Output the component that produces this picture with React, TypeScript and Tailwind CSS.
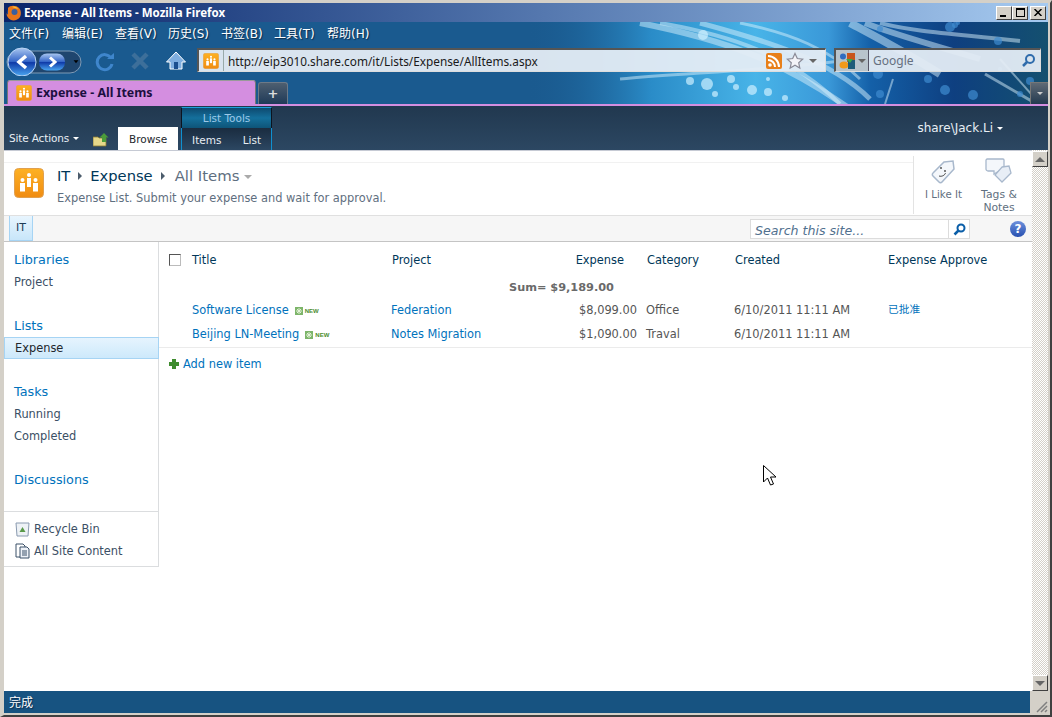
import React from "react";

const dj = "font-['DejaVu_Sans','Noto_Sans_CJK_SC',sans-serif]";

function SiteLogo({ size = 30 }: { size?: number }) {
  return (
    <svg width={size} height={size} viewBox="0 0 30 30">
      <defs>
        <linearGradient id="lg" x1="0" y1="0" x2="0" y2="1">
          <stop offset="0" stopColor="#fdb124" />
          <stop offset="1" stopColor="#f08c12" />
        </linearGradient>
      </defs>
      <rect x="0.5" y="0.5" width="29" height="29" rx="4" fill="url(#lg)" stroke="#e0a050" />
      <g fill="#fff">
        <circle cx="15" cy="7" r="2" />
        <rect x="13" y="10" width="4" height="9" />
        <circle cx="8.500" cy="12" r="2" />
        <rect x="6" y="15" width="5" height="8.500" />
        <circle cx="21.500" cy="12" r="2" />
        <rect x="19" y="15" width="5" height="8.500" />
      </g>
    </svg>
  );
}

function Firefox() {
  return (
    <svg width="16" height="16" viewBox="0 0 16 16">
      <circle cx="8" cy="8" r="7" fill="#2a4f8f" />
      <path d="M2 3c2-3 8-3 11 0 2 2 2.500 6 1 9-2 3-6 4-9 3-3-1.500-4.500-4-4.500-7 0.500 1 1 1.500 1.500 1.500C2 7 2 5 2 3z" fill="#e8751a" />
      <circle cx="8.500" cy="7" r="3" fill="#3a5f9f" />
      <path d="M6 2c3-1 5 0 6 2-2-1-4-1-6-2z" fill="#f7c33a" />
    </svg>
  );
}

function Art() {
  const dots = [
    [703, 36, 5], [707, 85, 6], [731, 80, 4], [736, 88, 3], [752, 91, 5], [768, 93, 4], [785, 99, 3], [768, 80, 2], [715, 95, 3], [690, 82, 4],
    [950, 28, 5], [955, 26, 3], [998, 42, 4], [945, 91, 5], [973, 96, 5], [928, 80, 4], [878, 75, 5], [880, 95, 4], [958, 24, 2],
    [880, 30, 3], [1020, 95, 3], [1000, 70, 2], [1030, 82, 4],
  ];
  return (
    <svg className="absolute left-0 top-0 pointer-events-none" width="1044" height="82" viewBox="4 23 1044 82" preserveAspectRatio="none">
      <defs>
        <linearGradient id="a1" x1="0" y1="0" x2="1" y2="0">
          <stop offset="0" stopColor="#1a5a8f" stopOpacity="0" />
          <stop offset="0.5" stopColor="#1a5a8f" stopOpacity="0" />
          <stop offset="0.62" stopColor="#2a8cc8" />
          <stop offset="0.72" stopColor="#48b4e8" />
          <stop offset="0.79" stopColor="#3a98d8" />
          <stop offset="0.83" stopColor="#1460a8" />
          <stop offset="0.91" stopColor="#0e3f80" />
          <stop offset="1" stopColor="#14506f" />
        </linearGradient>
      </defs>
      <rect x="4" y="23" width="1044" height="82" fill="url(#a1)" />
      <g stroke="#d8f0fc" fill="none" strokeOpacity="0.5">
        <path d="M640 24C720 40 780 60 850 110" strokeWidth="6" />
        <path d="M660 24C730 36 790 56 840 105" strokeWidth="4" />
        <path d="M700 24C760 40 830 60 870 100" strokeWidth="5" />
        <path d="M740 24C790 34 830 50 860 80" strokeWidth="3" />
        <path d="M620 80C680 74 760 72 840 62" strokeWidth="3" />
        <path d="M850 24C880 40 900 50 940 75" strokeWidth="8" />
        <path d="M865 24C895 36 930 45 980 60" strokeWidth="6" />
        <path d="M880 24C920 34 960 35 1020 42" strokeWidth="4" />
        <path d="M1000 60L1040 105" strokeWidth="2" />
        <path d="M985 75L1035 104" strokeWidth="3" />
        <path d="M893 80L885 105" strokeWidth="2" />
      </g>
      <g>
        {dots.map(([x, y, r], i) => (
          <circle key={i} cx={x} cy={y} r={r} fill={x > 860 ? "#3f8cd0" : "#cdf0ff"} fillOpacity={0.7} />
        ))}
      </g>
    </svg>
  );
}

function WinBtn({ children }: { children: React.ReactNode }) {
  return (
    <div className="w-[16px] h-[14px] bg-[#d4d0c8] border-t border-l border-white border-r border-b border-r-[#404040] border-b-[#404040] flex items-center justify-center">
      {children}
    </div>
  );
}

const navHead = "text-[12.8px] leading-[16px] text-[#0072bc]";
const navItem = "text-[11.4px] leading-[14px] text-[#3b4f65]";
const headCell = "text-[11.4px] leading-[14px] text-[#003759]";
const linkCell = "text-[11.4px] leading-[14px] text-[#0072bc]";
const dataCell = "text-[11.4px] leading-[14px] text-[#555555]";
const rowGrid = "grid grid-cols-[33px_199px_169px_77px_9px_88px_154px_1fr] items-center";

function NewBadge() {
  return (
    <span className="inline-flex items-center ml-[6px] gap-[2px] align-middle">
      <svg width="8" height="8" viewBox="0 0 8 8">
        <rect width="8" height="8" fill="#7db56a" />
        <path d="M4 1v6M1 4h6M2 2l4 4M6 2L2 6" stroke="#e4f2d8" strokeWidth="1" />
      </svg>
      <span className="text-[6px] leading-[8px] font-bold text-[#4c8c2c] font-['Liberation_Sans',sans-serif]">NEW</span>
    </span>
  );
}

export default function App() {
  return (
    <div className={`w-[1052px] h-[717px] overflow-hidden bg-[#d4d0c8] flex flex-col border-t-[3px] border-l-[4px] border-r-[2px] border-b-[2px] pr-[2px] border-t-[#d4d0c8] border-l-[#d4d0c8] border-r-[#404040] border-b-[#404040] ${dj}`}>
      {/* Title bar */}
      <div className="h-[19px] shrink-0 bg-gradient-to-r from-[#0a246a] to-[#a6caf0] flex items-center justify-between pl-[2px] pr-[2px]">
        <div className="flex items-center gap-[2px]">
          <Firefox />
          <span className="text-[11.5px] font-bold text-white font-['Noto_Sans',sans-serif] leading-[14px]">Expense - All Items - Mozilla Firefox</span>
        </div>
        <div className="flex items-center">
          <WinBtn><span className="w-[6px] h-[2px] bg-black mt-[7px] mr-[2px]" /></WinBtn>
          <WinBtn><span className="w-[9px] h-[9px] border border-black border-t-2" /></WinBtn>
          <div className="w-[2px]" />
          <WinBtn>
            <svg width="8" height="7" viewBox="0 0 8 7"><path d="M0.500 0l7 7M7.500 0l-7 7" stroke="#000" strokeWidth="1.500" /></svg>
          </WinBtn>
        </div>
      </div>

      {/* Chrome */}
      <div className="relative h-[82px] shrink-0 bg-[#1a5a8f] flex flex-col">
        <Art />
        <div className="relative h-[23px] flex items-center pl-[5px] text-[12px] text-white">
          {["文件(F)", "编辑(E)", "查看(V)", "历史(S)", "书签(B)", "工具(T)", "帮助(H)"].map((m) => (
            <span key={m} className="w-[53px] whitespace-nowrap leading-[16px] [text-shadow:1px_1px_1px_#0b2c4d]">{m}</span>
          ))}
        </div>
        {/* Nav */}
        <div className="relative h-[32px] flex items-center pl-[1px]">
          <div className="relative w-[78px] h-[29px] shrink-0">
            <svg width="78" height="29" viewBox="0 0 78 29">
              <defs>
                <linearGradient id="bk" x1="0" y1="0" x2="0" y2="1">
                  <stop offset="0" stopColor="#a9c6f0" />
                  <stop offset="0.48" stopColor="#3566c8" />
                  <stop offset="0.52" stopColor="#0f3aa8" />
                  <stop offset="1" stopColor="#4aa6f0" />
                </linearGradient>
              </defs>
              <rect x="2" y="4" width="74" height="22" rx="11" fill="#1f466f" stroke="#7f9ab5" />
              <rect x="34" y="6.500" width="26" height="17" rx="8" fill="url(#bk)" />
              <circle cx="17" cy="15" r="14" fill="url(#bk)" stroke="#b8d4f4" strokeWidth="1" />
              <path d="M21 9l-7 6 7 6" fill="none" stroke="#fff" strokeWidth="3.500" />
              <path d="M53 10.500l5 4.500-5 4.500" fill="none" stroke="#fff" strokeWidth="3" transform="translate(-8 0)" />
              <path d="M72 14h5l-2.500 3z" fill="#000" transform="translate(-2 -0.500) scale(0.98)" />
            </svg>
          </div>
          <div className="ml-[11px] w-[22px] h-[22px] shrink-0">
            <svg width="22" height="22" viewBox="0 0 22 22"><path d="M17 8a7.500 7.500 0 1 0 1 6" fill="none" stroke="#3f86cc" strokeWidth="3" /><path d="M13 9h7V3z" fill="#3f86cc" /></svg>
          </div>
          <div className="ml-[14px] w-[20px] h-[20px] shrink-0">
            <svg width="20" height="20" viewBox="0 0 20 20"><path d="M3 3l14 14M17 3L3 17" stroke="#3d6f9a" strokeWidth="4.500" /></svg>
          </div>
          <div className="ml-[16px] w-[20px] h-[20px] shrink-0">
            <svg width="20" height="20" viewBox="0 0 20 20"><path d="M10 1L0.500 11H4v7h12v-7h3.500z" fill="#7faee0" stroke="#fff" strokeWidth="1" /><rect x="8" y="11" width="4" height="7" fill="#1b4f8f" /></svg>
          </div>
          {/* URL bar */}
          <div className="ml-[11px] -mt-[2px] w-[629px] h-[24px] shrink-0 bg-[#e4ecf4]/95 border-t-2 border-l-2 border-t-[#555] border-l-[#555] border-r border-b border-r-[#ddd] border-b-[#ddd] flex items-center">
            <div className="w-[25px] h-[21px] flex items-center justify-center border-r border-[#9aa]">
              <SiteLogo size={16} />
            </div>
            <span className="ml-[4px] text-[11.8px] text-[#1a1a1a] leading-[16px] grow font-['Noto_Sans',sans-serif]">http://eip3010.share.com/it/Lists/Expense/AllItems.aspx</span>
            <svg width="16" height="16" viewBox="0 0 16 16" className="mr-[4px]">
              <rect width="16" height="16" rx="2" fill="#e8801a" />
              <circle cx="4" cy="12" r="1.800" fill="#fff" />
              <path d="M2 7a7 7 0 0 1 7 7M2 3a11 11 0 0 1 11 11" fill="none" stroke="#fff" strokeWidth="2" />
            </svg>
            <svg width="18" height="18" viewBox="0 0 18 18" className="mr-[5px]">
              <path d="M9 1.500l2.300 5 5.400.6-4 3.600 1.100 5.300L9 13.300 4.200 16l1.100-5.300-4-3.600 5.400-.6z" fill="#f4f4f8" stroke="#8a8a96" strokeWidth="1.200" />
            </svg>
            <span className="w-0 h-0 border-l-[4px] border-r-[4px] border-t-[4px] border-transparent border-t-[#666] mr-[8px]" />
          </div>
          {/* Search */}
          <div className="ml-[8px] -mt-[2px] w-[207px] h-[24px] shrink-0 bg-[#e4ecf4]/95 border-t-2 border-l-2 border-t-[#555] border-l-[#555] border-r border-b border-r-[#ddd] border-b-[#ddd] flex items-center">
            <div className="w-[33px] h-[21px] bg-[#b8c4cc] flex items-center pl-[3px] gap-[3px] border-r border-[#556]">
              <svg width="16" height="16" viewBox="0 0 16 16">
                <circle cx="4" cy="3.500" r="3" fill="#2f6cc0" />
                <path d="M8 0h8v9H8z" fill="#c8561c" />
                <ellipse cx="5" cy="12" rx="4.500" ry="3.500" fill="#f29a1a" />
                <path d="M9 7h7v9H9z" fill="#1d5c7a" />
                <path d="M7 6h7l-3 4z" fill="#3fa845" />
              </svg>
              <span className="w-0 h-0 border-l-[4px] border-r-[4px] border-t-[4px] border-transparent border-t-[#666]" />
            </div>
            <span className="ml-[4px] text-[12px] text-[#667080] grow leading-[16px] font-['Noto_Sans',sans-serif]">Google</span>
            <svg width="15" height="15" viewBox="0 0 15 15" className="mr-[4px]"><circle cx="9" cy="6" r="4" fill="none" stroke="#2f6cac" strokeWidth="2" /><path d="M6 9l-4 4" stroke="#2f6cac" strokeWidth="2.500" /></svg>
          </div>
        </div>
        {/* Tabs */}
        <div className="relative h-[27px] flex items-end pl-[3px]">
          <div className="w-[249px] h-[24px] bg-[#d48ee0] border-t border-l border-r border-t-[#999] border-l-[#777] border-r-[#777] rounded-t-[3px] flex items-center pl-[8px] gap-[4px]">
            <SiteLogo size={16} />
            <span className="text-[12.4px] font-bold text-[#1c1040] leading-[16px] mt-px font-['Noto_Sans',sans-serif]">Expense - All Items</span>
          </div>
          <div className="ml-[2px] w-[30px] h-[22px] rounded-t-[3px] bg-gradient-to-b from-[#4e5f70] to-[#1f3a58] border-t border-l border-r border-[#6d7a88] flex items-center justify-center text-[#dddddd] text-[13px] font-bold leading-none">+</div>
          <div className="ml-auto w-[18px] h-[22px] bg-gradient-to-b from-[#5f6a75] to-[#243a50] border-l border-t border-[#777] flex items-center justify-center">
            <span className="w-0 h-0 border-l-[3px] border-r-[3px] border-t-[3px] border-transparent border-t-[#ccc]" />
          </div>
        </div>
      </div>

      {/* Purple line */}
      <div className="h-[2px] bg-[#d48ee0] shrink-0" />

      {/* SP ribbon */}
      <div className="h-[44px] shrink-0 bg-gradient-to-b from-[#21384f] to-[#2c4762] flex items-end text-[11px] leading-[14px] text-white pl-[5px]">
        <div className="flex items-center gap-[4px] mb-[5px] text-[#e8eef4]">
          <span className="text-[10.5px] tracking-[-0.15px]">Site Actions</span>
          <span className="w-0 h-0 border-l-[3px] border-r-[3px] border-t-[3px] border-transparent border-t-white mt-[1px]" />
        </div>
        <div className="ml-[14px] mb-[3px] shrink-0">
          <svg width="16" height="14" viewBox="0 0 16 14">
            <path d="M0 4h5l1 1h7v8H0z" fill="#e6d88a" stroke="#8a7a30" strokeWidth="0.800" />
            <path d="M11 0l4.500 4.500H13V9H9V4.500H6.500z" fill="#4c9c3a" />
          </svg>
        </div>
        <div className="ml-[9px] w-[60px] h-[23px] bg-white flex items-center justify-center text-[#23272c] text-[10.5px] pt-px">Browse</div>
        <div className="ml-[3px] w-[91px] flex flex-col h-[43px] mt-auto">
          <div className="h-[21px] border-t border-x border-[#0c1420] border-t-[#1ca0dc] bg-gradient-to-b from-[#0e4a70] via-[#14709c] to-[#0e5478] flex items-center justify-center text-[#9cc8e8] text-[10.5px]">List Tools</div>
          <div className="h-[22px] border-x border-x-[#1090d0] flex items-center justify-between pl-[10px] pr-[10px] pt-px text-[#e8eef4] text-[10.5px] bg-gradient-to-b from-[#1a2c40] to-[#2c4762]">
            <span>Items</span>
            <span>List</span>
          </div>
        </div>
        <div className="ml-auto mr-[45px] self-center mt-[-1px] flex items-center gap-[4px] text-[12px] text-[#e8eef4]">
          <span>share\Jack.Li</span>
          <span className="w-0 h-0 border-l-[3px] border-r-[3px] border-t-[3px] border-transparent border-t-white mt-[2px]" />
        </div>
      </div>

      {/* Page + scrollbar */}
      <div className="flex-1 min-h-0 flex bg-white">
        <div className="w-[1028px] shrink-0 flex flex-col">
          {/* Title row */}
          <div className="h-[65px] shrink-0 flex border-t border-[#c6cad4]">
            <div className="grow flex bg-[linear-gradient(#f1f1f1,#f1f1f1)] bg-[length:100%_1px] bg-[position:0_11px] bg-no-repeat">
              <div className="pl-[10px] pt-[17px] shrink-0"><SiteLogo size={30} /></div>
              <div className="pl-[13px] pt-[15px] grow">
                <div className="flex items-center h-[20px] text-[14.7px] leading-[20px] text-[#003759]">
                  <span>IT</span>
                  <span className="w-0 h-0 mx-[8px] border-y-[4px] border-l-[4px] border-transparent border-l-[#4c5c6c]" />
                  <span>Expense</span>
                  <span className="w-0 h-0 mx-[8px] border-y-[4px] border-l-[4px] border-transparent border-l-[#4c5c6c]" />
                  <span className="text-[#5e6e80] ml-[2px] text-[14.9px]">All Items</span>
                  <span className="w-0 h-0 ml-[4px] mt-[2px] border-x-[4px] border-t-[4px] border-transparent border-t-[#aaa]" />
                </div>
                <div className="mt-[5px] text-[11.4px] leading-[14px] text-[#5f6f80]">Expense List. Submit your expense and wait for approval.</div>
              </div>
            </div>
            <div className="w-[119px] h-[58px] mt-[5px] shrink-0 border-l border-[#e3e3e3] flex text-[10.2px] leading-[13px] text-[#5f6f80]">
              <div className="w-[59px] flex flex-col items-center pt-[3px]">
                <svg width="26" height="26" viewBox="0 0 26 26" className="-ml-px">
                  <path d="M14 3l9-1 1 8-12 13a2 2 0 0 1-3 0l-6-6a2 2 0 0 1 0-3z" fill="#f4f7fb" stroke="#a8b8cc" strokeWidth="1.500" />
                  <circle cx="11" cy="9" r="0.900" fill="#444" /><circle cx="15" cy="12" r="0.900" fill="#444" />
                  <path d="M9 17c3 1 6-1 6.500-3" fill="none" stroke="#444" strokeWidth="1" />
                </svg>
                <span className="mt-[3px] whitespace-nowrap">I Like It</span>
              </div>
              <div className="w-[52px] flex flex-col items-center pt-[2px] text-center text-[10.8px]">
                <svg width="28" height="27" viewBox="0 0 28 27">
                  <path d="M2 1h16a1 1 0 0 1 1 1v10l-5 1-5 3v-3H3a2 2 0 0 1-2-2V2z" fill="#f4f7fb" stroke="#a8b8cc" strokeWidth="1.300" />
                  <path d="M17 9l7-1 2 7-9 9-7-7z" fill="#e8eef6" stroke="#a8b8cc" strokeWidth="1.300" />
                </svg>
                <span className="mt-[3px]">Tags &amp; Notes</span>
              </div>
            </div>
          </div>
          {/* Breadcrumb bar */}
          <div className="h-[27px] shrink-0 flex items-stretch border-t border-b border-t-[#e0e0e0] border-b-[#c4c4c4] bg-[#f6f6f6]">
            <div className="ml-[5px] w-[24px] bg-gradient-to-b from-[#e8f5fe] to-[#c8e6fa] border-x border-b border-[#a6d4f4] flex items-center justify-center text-[11px] text-[#1d3b56]">IT</div>
            <div className="ml-auto mr-[62px] mt-[3px] mb-[2px] w-[220px] bg-white border border-[#dcdcdc] flex items-center">
              <span className="grow pl-[4px] text-[12.6px] italic leading-[19px] pt-[2px] text-[#51708e]">Search this site...</span>
              <div className="w-[21px] h-full border-l border-[#dcdcdc] flex items-center justify-center">
                <svg width="13" height="13" viewBox="0 0 13 13"><circle cx="8" cy="5" r="3.500" fill="none" stroke="#0a5ea8" strokeWidth="2" /><path d="M5.500 7.500l-4 4" stroke="#0a5ea8" strokeWidth="2.500" /></svg>
              </div>
            </div>
            <div className="absolute left-[1010px] top-[221px] w-[16px] h-[16px] rounded-full bg-gradient-to-b from-[#6d90dc] to-[#2850b0] text-white text-[12px] font-bold flex items-center justify-center leading-none">?</div>
          </div>
          {/* Body */}
          <div className="flex-1 min-h-0 flex">
            <div className="w-[155px] shrink-0 h-[325px] border-r border-b border-[#dbdddf] flex flex-col">
              <div className="h-[270px] border-b border-[#dbdddf] pt-[10px]">
                <div className={`pl-[10px] ${navHead}`}>Libraries</div>
                <div className={`pl-[10px] mt-[7px] ${navItem}`}>Project</div>
                <div className={`pl-[10px] mt-[29px] ${navHead}`}>Lists</div>
                <div className="mt-[3px] h-[22px] pl-[10px] pt-px flex items-center bg-gradient-to-b from-[#e6f4fe] to-[#cde9fb] border border-[#a6d4f4] -mr-px text-[11.4px] text-[#23272c]">Expense</div>
                <div className={`pl-[10px] mt-[25px] ${navHead}`}>Tasks</div>
                <div className={`pl-[10px] mt-[7px] ${navItem}`}>Running</div>
                <div className={`pl-[10px] mt-[8px] ${navItem}`}>Completed</div>
                <div className={`pl-[10px] mt-[29px] ${navHead}`}>Discussions</div>
              </div>
              <div className="pl-[11px] pt-[9px] flex flex-col gap-[6px]">
                <div className={`flex items-center gap-[4px] h-[16px] ${navItem}`}>
                  <svg width="15" height="16" viewBox="0 0 15 16"><path d="M1 2h13l-1 13H2z" fill="#eef2f6" stroke="#8a9ab0" /><path d="M7.500 6l3 5h-6z" fill="#5a9a4a" /></svg>
                  <span>Recycle Bin</span>
                </div>
                <div className={`flex items-center gap-[4px] h-[16px] ${navItem}`}>
                  <svg width="15" height="16" viewBox="0 0 15 16"><path d="M1 1h7l2 2v11H1z" fill="#fff" stroke="#3b5068" /><path d="M5 4h7l2 2v9H5z" fill="#eef2f8" stroke="#3b5068" /><path d="M7 8h5M7 10h5M7 12h5" stroke="#3b5068" /></svg>
                  <span>All Site Content</span>
                </div>
              </div>
            </div>
            {/* List */}
            <div className="grow min-w-0 pt-[11px]">
              <div className={rowGrid}>
                <div className="pl-[10px] h-[14px] flex items-center"><span className="w-[12px] h-[12px] border border-t-[#555] border-l-[#555] border-r-[#bbb] border-b-[#bbb] bg-white" /></div>
                <div className={headCell}>Title</div>
                <div className={`pl-px ${headCell}`}>Project</div>
                <div className={`text-right pr-[13px] ${headCell}`}>Expense</div>
                <div />
                <div className={`pl-px ${headCell}`}>Category</div>
                <div className={`pl-px ${headCell}`}>Created</div>
                <div className={`whitespace-nowrap ${headCell}`}>Expense Approve</div>
              </div>
              <div className="pl-[350px] mt-[14px] text-[11.3px] leading-[14px] font-bold text-[#6a6a6a]">Sum= $9,189.00</div>
              <div className={`mt-[8px] h-[14px] ${rowGrid}`}>
                <div />
                <div className={`${linkCell} whitespace-nowrap`}>Software License<NewBadge /></div>
                <div className={linkCell}>Federation</div>
                <div className={`text-right ${dataCell}`}>$8,099.00</div>
                <div />
                <div className={dataCell}>Office</div>
                <div className={`whitespace-nowrap ${dataCell}`}>6/10/2011 11:11 AM</div>
                <div className="text-[10.7px] leading-[14px] text-[#0072bc]">已批准</div>
              </div>
              <div className={`mt-[10px] h-[14px] ${rowGrid}`}>
                <div />
                <div className={`${linkCell} whitespace-nowrap`}>Beijing LN-Meeting<NewBadge /></div>
                <div className={linkCell}>Notes Migration</div>
                <div className={`text-right ${dataCell}`}>$1,090.00</div>
                <div />
                <div className={dataCell}>Traval</div>
                <div className={`whitespace-nowrap ${dataCell}`}>6/10/2011 11:11 AM</div>
                <div />
              </div>
              <div className="mt-[6px] border-t border-[#ebebeb] pt-[9px] pl-[10px] flex items-center gap-[4px]">
                <svg width="10" height="10" viewBox="0 0 10 10"><path d="M3 0h4v3h3v4H7v3H3V7H0V3h3z" fill="#3f8c2f" /></svg>
                <span className={linkCell}>Add new item</span>
              </div>
            </div>
          </div>
        </div>
        {/* Scrollbar */}
        <div className="w-[16px] shrink-0 flex flex-col bg-[repeating-conic-gradient(#d4d0c8_0_25%,#ffffff_0_50%)] bg-[length:2px_2px]">
          <div className="h-[16px] mt-px bg-[#d4d0c8] border-t border-l border-white border-r border-b border-r-[#404040] border-b-[#404040] flex items-center justify-center">
            <span className="w-0 h-0 border-x-[5px] border-b-[5px] border-transparent border-b-[#666]" />
          </div>
          <div className="grow" />
          <div className="h-[16px] bg-[#d4d0c8] border-t border-l border-white border-r border-b border-r-[#404040] border-b-[#404040] flex items-center justify-center">
            <span className="w-0 h-0 border-x-[5px] border-t-[5px] border-transparent border-t-[#666]" />
          </div>
        </div>
      </div>

      {/* Status */}
      <div className="h-[24px] shrink-0 flex bg-[#d4d0c8] items-start">
        <div className="w-[1026px] h-[22px] bg-[#175381] flex items-center pl-[5px] pt-px text-[12px] text-white leading-[16px] [text-shadow:1px_1px_1px_#0b2c4d]">完成</div>
        <div className="grow h-full relative overflow-hidden">
          <svg className="absolute right-0 bottom-[2px]" width="14" height="14" viewBox="0 0 14 14"><path d="M3 13L13 3M7 13l6-6M11 13l2-2" stroke="#808080" strokeWidth="1.500" /></svg>
        </div>
      </div>

      {/* Cursor */}
      <svg className="absolute left-[763px] top-[465px]" width="14" height="22" viewBox="0 0 14 22">
        <path d="M0.500 0.500V17l4-4 3 7 3-1-3-7h5.500z" fill="#fff" stroke="#000" strokeWidth="1" />
      </svg>
    </div>
  );
}
